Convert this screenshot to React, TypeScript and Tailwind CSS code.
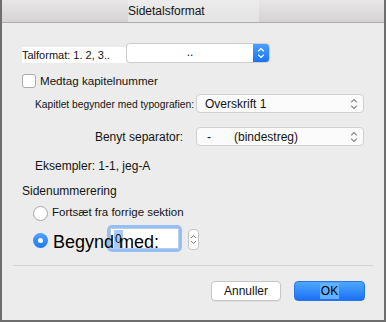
import React from "react";

const Chevrons = ({ color, w = 8, h = 14 }: { color: string; w?: number; h?: number }) => (
  <svg width={w} height={h} viewBox="0 0 8 14" fill="none">
    <path d="M1.5 5 L4 2.5 L6.5 5" stroke={color} strokeWidth="1.1" strokeLinecap="round" strokeLinejoin="round" />
    <path d="M1.5 9 L4 11.5 L6.5 9" stroke={color} strokeWidth="1.1" strokeLinecap="round" strokeLinejoin="round" />
  </svg>
);

export default function App() {
  return (
    <div
      className="w-[386px] h-[322px] bg-[#ececec] border-l-2 border-r-2 border-b-2 border-[#6e6e6e] flex flex-col text-[#141414] overflow-hidden"
      style={{ fontFamily: '"Liberation Sans", Arial, sans-serif' }}
    >
      {/* Title bar */}
      <div className="h-[23px] shrink-0 border-b border-[#acacac] bg-gradient-to-b from-[#e8e6e6] to-[#d5d3d3] flex">
        <div className="ml-[126px] w-[131px] h-full bg-gradient-to-b from-[#ececec] to-[#e4e3e3] flex items-center text-[12px] leading-none">
          Sidetalsformat
        </div>
      </div>

      {/* Talformat */}
      <div className="mt-[20px] h-[20px] flex items-end pl-[20px]">
        <div className="bg-white h-[16px] w-[104px] text-[11px] flex items-center">Talformat: 1. 2, 3..</div>
        <div className="w-[144px] h-[20px] bg-white border border-[#cdcdcd] rounded-[4px] flex items-stretch overflow-hidden">
          <div className="flex-1 flex items-center justify-center text-[12px] leading-none pb-[2px]">..</div>
          <div className="w-[16px] bg-gradient-to-b from-[#4aa0ff] to-[#1a73f5] flex items-center justify-center">
            <Chevrons color="#ffffff" />
          </div>
        </div>
      </div>

      {/* Checkbox */}
      <div className="mt-[10px] h-[15px] flex items-center pl-[20px]">
        <div className="w-[14px] h-[14px] bg-white border border-[#aaaaaa] rounded-[3px]" />
        <div className="ml-[4px] text-[11.6px] leading-none">Medtag kapitelnummer</div>
      </div>

      {/* Kapitlet */}
      <div className="mt-[6px] h-[19px] flex items-center">
        <div className="w-[192px] text-right text-[10.25px] leading-none pt-[3px]">Kapitlet begynder med typografien:</div>
        <div className="ml-[2px] w-[168px] h-[19px] bg-[#fbfbfb] border border-[#d0d0d0] rounded-[4px] flex items-center pl-[8px] pr-[5px]">
          <span className="flex-1 text-[12px] leading-none pt-[1px]">Overskrift 1</span>
          <Chevrons color="#8c8c8c" />
        </div>
      </div>

      {/* Benyt separator */}
      <div className="mt-[14px] h-[19px] flex items-center">
        <div className="w-[192px] pr-[11px] text-right text-[12px] leading-none">Benyt separator:</div>
        <div className="ml-[2px] w-[168px] h-[19px] bg-[#fbfbfb] border border-[#d0d0d0] rounded-[4px] flex items-center pl-[10px] pr-[5px]">
          <span className="text-[12px] leading-none">-</span>
          <span className="ml-[23px] flex-1 text-[12px] leading-none pt-[1px]">(bindestreg)</span>
          <Chevrons color="#8c8c8c" />
        </div>
      </div>

      {/* Eksempler */}
      <div className="mt-[12px] h-[16px] flex items-center pl-[33px] text-[12px] leading-none">Eksempler: 1-1, jeg-A</div>

      {/* Sidenummerering */}
      <div className="mt-[9px] h-[16px] flex items-center pl-[20px] text-[12px] leading-none">Sidenummerering</div>

      {/* Radio 1 */}
      <div className="mt-[6px] h-[16px] flex items-center pl-[31px]">
        <div className="w-[15px] h-[15px] rounded-full bg-white border border-[#a6a6a6]" />
        <div className="ml-[4px] text-[11.5px] leading-none">Fortsæt fra forrige sektion</div>
      </div>

      {/* Radio 2 + input */}
      <div className="relative mt-[4px] h-[27px] flex items-center pl-[31px]">
        <div className="mt-[3px] w-[15px] h-[15px] rounded-full bg-gradient-to-b from-[#4fa3ff] to-[#1c78f2] flex items-center justify-center">
          <div className="w-[5px] h-[5px] rounded-full bg-white" />
        </div>
        <div className="ml-[59px] w-[75px] h-[27px] rounded-[5px] bg-[#95bff3] p-[3px]">
          <div className="w-full h-full bg-white border border-[#b9cde8] flex items-start pl-[3px] pt-[1px]">
            <span className="bg-[#a9cbf5] text-[12px] leading-[18px] px-[1px] h-[18px]">0</span>
          </div>
        </div>
        <div className="ml-[6px] mt-[1px] w-[11px] h-[21px] bg-white border border-[#c4c4c4] rounded-[4px] flex items-center justify-center">
          <Chevrons color="#6f6f6f" w={7} h={15} />
        </div>
        <div className="absolute left-[51px] top-[3px] h-[27px] flex items-center text-[18px] leading-none text-black">
          Begynd med:
        </div>
      </div>

      {/* Separator */}
      <div className="mt-[13px] mx-[11px] h-px bg-[#d4d4d4]" />

      {/* Buttons */}
      <div className="mt-[15px] h-[20px] flex justify-end gap-[13px] pr-[19px]">
        <div className="w-[70px] h-[20px] bg-white border border-[#c6c6c6] rounded-[4px] flex items-center justify-center text-[12px] leading-none shadow-[0_1px_0_rgba(0,0,0,0.05)]">
          Annuller
        </div>
        <div className="w-[71px] h-[20px] bg-gradient-to-b from-[#4ea7ff] to-[#1a6ff5] border border-[#2a74ea] rounded-[4px] flex items-center justify-center text-[12px] leading-none">
          <span className="bg-[#62b0ff] px-[1px] py-[2px] text-black">OK</span>
        </div>
      </div>
    </div>
  );
}
